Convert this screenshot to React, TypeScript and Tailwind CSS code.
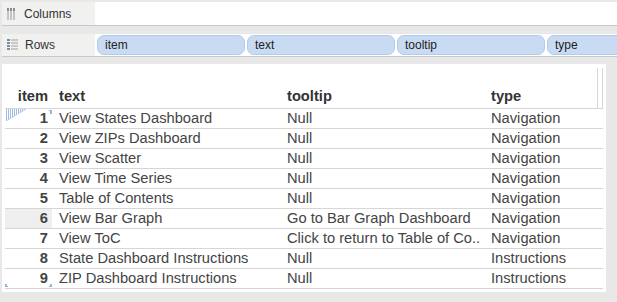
import React from "react";

const rows = [
  ["1", "View States Dashboard", "Null", "Navigation"],
  ["2", "View ZIPs Dashboard", "Null", "Navigation"],
  ["3", "View Scatter", "Null", "Navigation"],
  ["4", "View Time Series", "Null", "Navigation"],
  ["5", "Table of Contents", "Null", "Navigation"],
  ["6", "View Bar Graph", "Go to Bar Graph Dashboard", "Navigation"],
  ["7", "View ToC", "Click to return to Table of Co..", "Navigation"],
  ["8", "State Dashboard Instructions", "Null", "Instructions"],
  ["9", "ZIP Dashboard Instructions", "Null", "Instructions"],
];

const pills = ["item", "text", "tooltip", "type"];

function ColumnsIcon() {
  return (
    <svg width="9" height="12" viewBox="0 0 9 12">
      <rect x="0" y="0" width="2" height="12" fill="#c4c4c4" />
      <rect x="3" y="0" width="2" height="12" fill="#c4c4c4" />
      <rect x="6" y="0" width="2" height="12" fill="#c4c4c4" />
      <rect x="0" y="0" width="2" height="3" fill="#8c8c8c" />
      <rect x="3" y="0" width="2" height="3" fill="#8c8c8c" />
      <rect x="6" y="0" width="2" height="3" fill="#8c8c8c" />
    </svg>
  );
}

function RowsIcon() {
  return (
    <svg width="11" height="12" viewBox="0 0 11 12">
      {[0, 3, 6, 9].map((y) => (
        <g key={y}>
          <rect x="0" y={y} width="3" height="2" fill="#7b8ea5" />
          <rect x="4" y={y} width="7" height="2" fill="#c8c8c8" />
        </g>
      ))}
    </svg>
  );
}

function Hatch() {
  return (
    <svg width="20" height="12" viewBox="0 0 20 12">
      <defs>
        <clipPath id="tri">
          <polygon points="0,0 20,0 0,12" />
        </clipPath>
      </defs>
      <g clipPath="url(#tri)">
        {[0, 2, 4, 6, 8, 10, 12, 14, 16, 18].map((x) => (
          <rect key={x} x={x} y="0" width="1" height="12" fill="#9ebde2" />
        ))}
      </g>
      <line x1="0" y1="12" x2="20" y2="0" stroke="#b7cde9" strokeWidth="1" />
    </svg>
  );
}

export default function App() {
  return (
    <div
      className="flex h-[302px] w-[617px] flex-col overflow-hidden bg-[#e8e8e8] pl-[2px] pt-[2px] text-[#333]"
      style={{ fontFamily: "'Liberation Sans', Arial, sans-serif" }}
    >
      <div className="flex h-[24px] border-b border-[#c8c8c8] text-[12px]">
        <div className="flex w-[93px] items-center gap-[8px] bg-[#f1f1f0] pl-[5px]">
          <ColumnsIcon />
          <span>Columns</span>
        </div>
        <div className="flex-1 bg-white" />
      </div>

      <div className="mt-[8px] flex h-[23px] border-b border-[#c8c8c8] bg-white text-[12px]">
        <div className="flex w-[93px] shrink-0 items-center gap-[7px] bg-[#f1f1f0] pl-[5px]">
          <RowsIcon />
          <span>Rows</span>
        </div>
        <div className="flex gap-[2px] pl-[2px] pt-[1px]">
          {pills.map((p) => (
            <div
              key={p}
              className="flex h-[20px] w-[148px] shrink-0 items-center rounded-[7px] border border-[#b3cbea] bg-[#c9dbf3] pl-[7px] text-[#222]"
            >
              {p}
            </div>
          ))}
        </div>
      </div>

      <div className="mt-[7px] h-[228px] w-[604px] bg-white pl-[3px] text-[14.7px] text-[#444]">
        <div className="flex h-[45px] w-[598px] border-b border-[#d6d6d6] pt-[4px] font-bold text-[#333]">
          <div className="flex w-[47px] items-end justify-end pb-[1px] pr-[4px]">item</div>
          <div className="flex w-[235px] items-end pb-[1px] pl-[7px]">text</div>
          <div className="flex w-[204px] items-end pb-[1px]">tooltip</div>
          <div className="flex w-[106px] items-end pb-[1px]">type</div>
          <div className="w-[6px] border-l border-r border-[#d6d6d6]" />
        </div>
        <div className="relative w-[598px]">
          {rows.map((r) => (
            <div key={r[0]} className="flex h-[20px] items-center border-b border-[#d6d6d6]">
              <div
                className={
                  r[0] === "6"
                    ? "flex h-full w-[47px] items-center justify-end bg-[#efefef] pr-[4px] font-bold text-[#444]"
                    : "flex h-full w-[47px] items-center justify-end pr-[4px] font-bold text-[#444]"
                }
              >
                {r[0]}
              </div>
              <div className="w-[235px] whitespace-nowrap pl-[7px]">{r[1]}</div>
              <div className="w-[204px] whitespace-nowrap">{r[2]}</div>
              <div className="w-[106px] whitespace-nowrap">{r[3]}</div>
            </div>
          ))}
          <div className="absolute left-[1px] top-0">
            <Hatch />
          </div>
          <div className="absolute left-[44px] top-[1px] h-[4px] w-[3px] border-r-2 border-t border-[#95b5dc]" />
          <div className="absolute bottom-[2px] left-0 h-[3px] w-[3px] border-b border-l-2 border-[#95b5dc]" />
          <div className="absolute bottom-[2px] left-[44px] h-[3px] w-[3px] border-b border-r-2 border-[#95b5dc]" />
        </div>
      </div>
    </div>
  );
}
